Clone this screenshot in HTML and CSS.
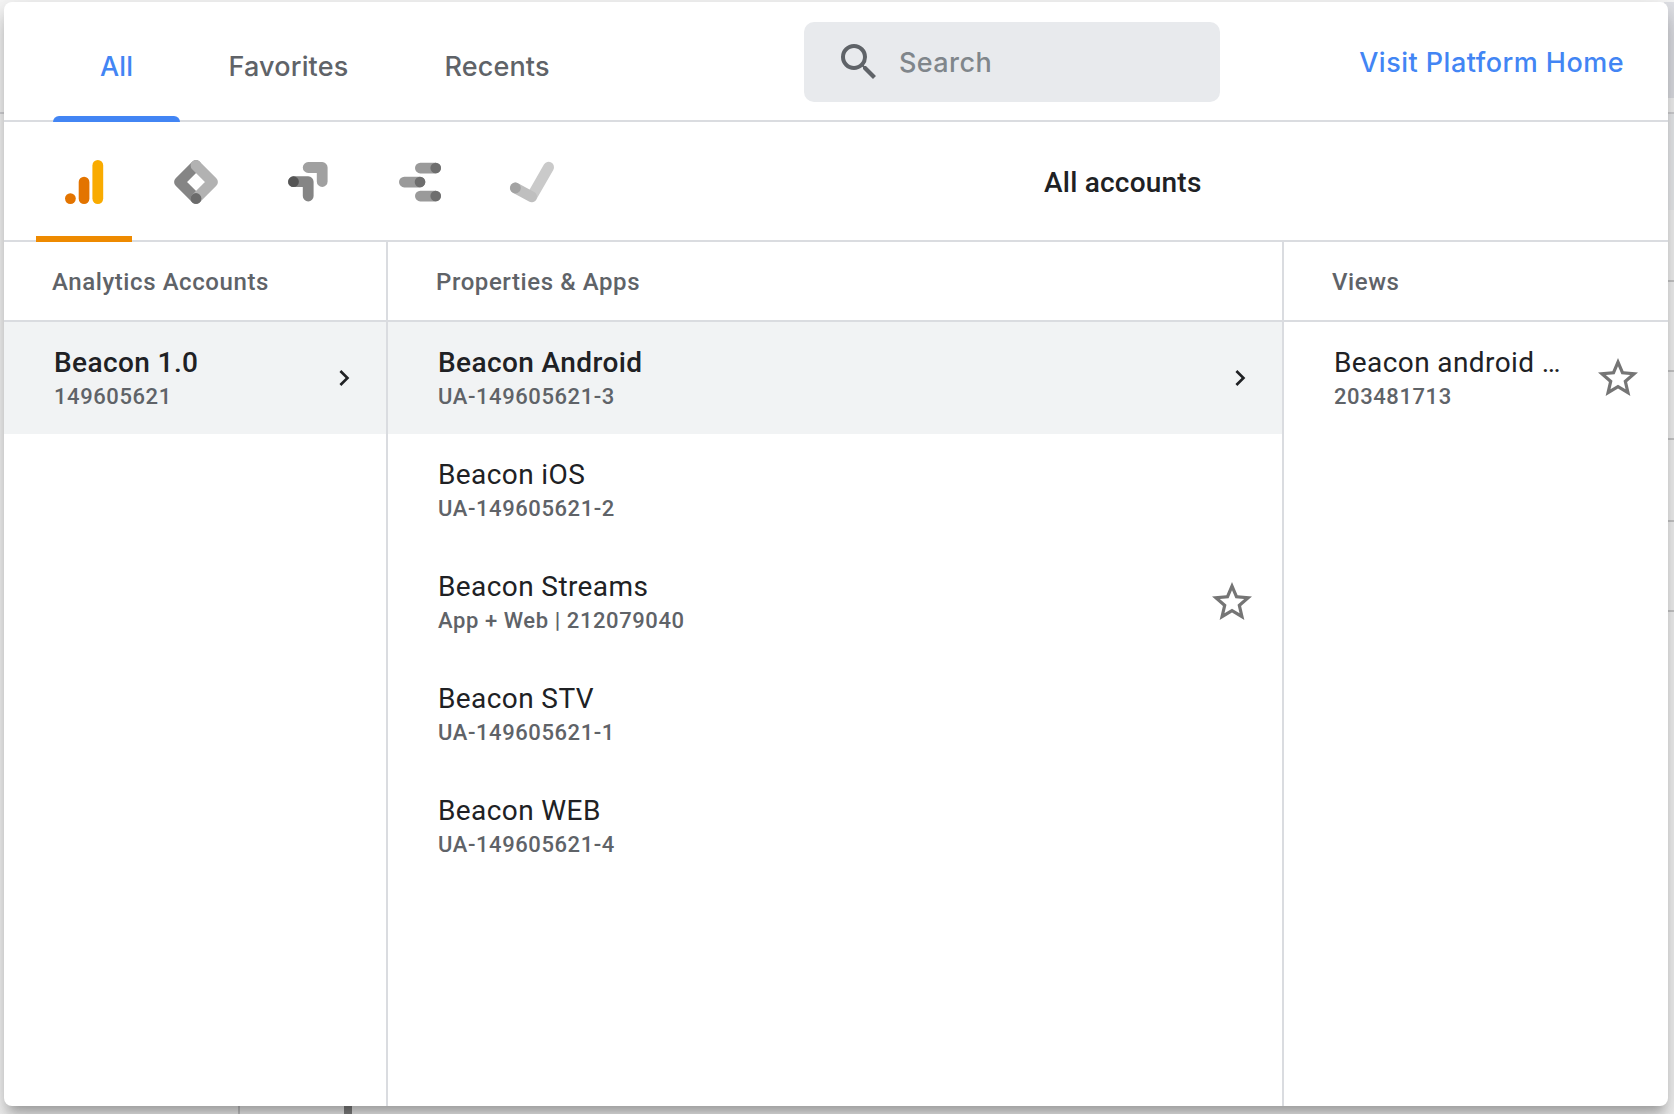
FILE: index.html
```html
<!DOCTYPE html>
<html lang="en">
<head>
<meta charset="utf-8">
<title>All accounts</title>
<link rel="stylesheet" href="styles.css">
</head>
<body>
<div class="backdrop"></div>
<div class="backdrop-bottom"></div>
<main class="panel">
  <header class="topbar">
    <nav class="tabs">
      <a class="tab tab-all">All</a>
      <a class="tab tab-fav">Favorites</a>
      <a class="tab tab-rec">Recents</a>
    </nav>
    <div class="search">
      <svg width="48" height="48" viewBox="0 0 24 24" fill="#5f6368"><path d="M15.5 14h-.79l-.28-.27A6.471 6.471 0 0 0 16 9.5 6.5 6.5 0 1 0 9.5 16c1.61 0 3.09-.59 4.23-1.57l.27.28v.79l5 4.99L20.49 19l-4.99-5zm-6 0C7.01 14 5 11.99 5 9.5S7.01 5 9.5 5 14 7.01 14 9.5 11.99 14 9.5 14z"/></svg>
      <span class="search-text">Search</span>
    </div>
    <a class="home">Visit Platform Home</a>
  </header>
  <section class="products">
    <div class="product active">
      <svg width="44" height="44" viewBox="0 0 44 44"><circle cx="8.4" cy="38.6" r="5.4" fill="#e37400"/><rect x="16.7" y="16.7" width="10.7" height="27.3" rx="5.35" fill="#e37400"/><rect x="30.4" y="0" width="10.8" height="44" rx="5.4" fill="#f9ab00"/></svg>
    </div>
    <div class="product">
      <svg width="44" height="44" viewBox="0 0 44 44" fill="none" stroke-width="10.8" stroke-linecap="round" stroke-linejoin="round"><path d="M22 5.5L5.5 22L22 38.5" stroke="#858585"/><path d="M22 5.5L38.5 22L22 38.5" stroke="#b2b2b2"/><circle cx="22" cy="38.5" r="5.4" fill="#6b6b6b"/></svg>
    </div>
    <div class="product">
      <svg width="44" height="44" viewBox="0 0 44 44" fill="none" stroke-width="10.8" stroke-linecap="round" stroke-linejoin="round"><path d="M22.2 7.5H36.2V21.5" stroke="#a0a0a0"/><path d="M7.5 21.7H22.2V36" stroke="#858585"/><circle cx="7.5" cy="21.7" r="5.4" fill="#555"/></svg>
    </div>
    <div class="product">
      <svg width="44" height="44" viewBox="0 0 44 44"><g fill="#9a9a9a"><rect x="17" y="2.7" width="26" height="10.7" rx="5.35"/><rect x="1" y="16.7" width="26.3" height="10.7" rx="5.35"/><rect x="17" y="30.7" width="26" height="10.7" rx="5.35"/></g><g fill="#6e6e6e"><circle cx="37.7" cy="8" r="5.3"/><circle cx="22" cy="22" r="5.3"/><circle cx="37.7" cy="36" r="5.3"/></g></svg>
    </div>
    <div class="product">
      <svg width="44" height="44" viewBox="0 0 44 44" stroke-width="10.8" stroke-linecap="round"><path d="M21.9 36.4L38.6 7.2" stroke="#cacaca"/><path d="M5.4 28L21.6 36.8" stroke="#bfbfbf"/><circle cx="5.4" cy="28" r="5.4" fill="#a3a3a3"/></svg>
    </div>
    <h1 class="title">All accounts</h1>
  </section>
  <section class="columns">
    <div class="column">
      <h2 class="column-head">Analytics Accounts</h2>
      <div class="row selected">
        <div class="entry"><div class="name">Beacon 1.0</div><div class="id">149605621</div></div>
        <svg width="32" height="32" viewBox="0 0 24 24" fill="#202124"><path d="M10 6L8.59 7.41 13.17 12l-4.58 4.59L10 18l6-6z"/></svg>
      </div>
    </div>
    <div class="column">
      <h2 class="column-head">Properties &amp; Apps</h2>
      <div class="row selected">
        <div class="entry"><div class="name">Beacon Android</div><div class="id">UA-149605621-3</div></div>
        <svg width="32" height="32" viewBox="0 0 24 24" fill="#202124"><path d="M10 6L8.59 7.41 13.17 12l-4.58 4.59L10 18l6-6z"/></svg>
      </div>
      <div class="row"><div class="entry"><div class="name">Beacon iOS</div><div class="id">UA-149605621-2</div></div></div>
      <div class="row">
        <div class="entry"><div class="name">Beacon Streams</div><div class="id">App + Web | 212079040</div></div>
        <svg width="48" height="48" viewBox="0 0 24 24" fill="#757575"><path d="M22 9.24l-7.19-.62L12 2 9.19 8.63 2 9.24l5.46 4.73L5.82 21 12 17.27 18.18 21l-1.63-7.03L22 9.24zM12 15.4l-3.76 2.27 1-4.28-3.32-2.88 4.38-.38L12 6.1l1.71 4.04 4.38.38-3.32 2.88 1 4.28L12 15.4z"/></svg>
      </div>
      <div class="row"><div class="entry"><div class="name">Beacon STV</div><div class="id">UA-149605621-1</div></div></div>
      <div class="row"><div class="entry"><div class="name">Beacon WEB</div><div class="id">UA-149605621-4</div></div></div>
    </div>
    <div class="column">
      <h2 class="column-head">Views</h2>
      <div class="row">
        <div class="entry"><div class="name">Beacon android …</div><div class="id">203481713</div></div>
        <svg width="48" height="48" viewBox="0 0 24 24" fill="#757575"><path d="M22 9.24l-7.19-.62L12 2 9.19 8.63 2 9.24l5.46 4.73L5.82 21 12 17.27 18.18 21l-1.63-7.03L22 9.24zM12 15.4l-3.76 2.27 1-4.28-3.32-2.88 4.38-.38L12 6.1l1.71 4.04 4.38.38-3.32 2.88 1 4.28L12 15.4z"/></svg>
      </div>
    </div>
  </section>
</main>
</body>
</html>
```
FILE: styles.css
```css
* { box-sizing: border-box; }
body {
  margin: 0;
  width: 1674px;
  height: 1114px;
  padding: 2px 6px 8px 4px;
  overflow: hidden;
  background: #f8f8f8;
  font-family: Roboto, "Liberation Sans", sans-serif;
  color: #202124;
}
/* Page content showing around the edges of the panel */
.backdrop {
  position: absolute;
  inset: 0;
  background:
    linear-gradient(#d5d5d8, #d5d5d8) 0 112px / 100% 2px no-repeat,
    linear-gradient(#cccccd, #cccccd) 100% 280px / 10px 2px no-repeat,
    linear-gradient(#cccccd, #cccccd) 100% 370px / 10px 2px no-repeat,
    linear-gradient(#cccccd, #cccccd) 100% 438px / 10px 2px no-repeat,
    linear-gradient(#cccccd, #cccccd) 100% 520px / 10px 2px no-repeat,
    linear-gradient(#cccccd, #cccccd) 100% 610px / 10px 2px no-repeat,
    linear-gradient(#e2e3e8, #e2e3e8) 100% 2px / 10px 96px no-repeat,
    linear-gradient(#f0f2f4, #f0f2f4) 100% 114px / 10px 96px no-repeat;
}
.backdrop-bottom {
  position: absolute;
  left: 0;
  right: 0;
  bottom: 0;
  height: 12px;
  background:
    linear-gradient(#cccccd, #cccccd) 238px 0 / 2px 100% no-repeat,
    linear-gradient(#858585, #858585) 344px 0 / 8px 100% no-repeat;
}
.panel {
  position: relative;
  height: 1104px;
  display: flex;
  flex-direction: column;
  background: #fff;
  border-radius: 8px;
  box-shadow: 0 10px 10px -6px rgba(0,0,0,.2), 0 16px 20px 2px rgba(0,0,0,.14), 0 6px 28px 4px rgba(0,0,0,.12);
}
.topbar {
  height: 120px;
  flex: none;
  display: flex;
  border-bottom: 2px solid #dadce0;
}
.tabs {
  display: flex;
  width: 800px;
  padding-left: 49px;
  font: 500 27px/32px Inter, sans-serif;
  letter-spacing: .15px;
  color: #5f6368;
}
.tab { height: 120px; padding-top: 49px; text-align: center; white-space: nowrap; }
.tab-all { width: 127px; color: #4285f4; display: flex; flex-direction: column; justify-content: space-between; }
.tab-all::after { content: ""; height: 6px; background: #4285f4; border-radius: 6px 6px 0 0; }
.tab-fav { width: 217px; }
.tab-rec { width: 200px; }
.search {
  width: 416px;
  height: 80px;
  margin-top: 20px;
  padding-left: 31px;
  display: flex;
  align-items: center;
  background: #e8eaed;
  border-radius: 10px;
}
.search svg { margin-bottom: 1px; }
.search-text { margin: 2px 0 0 16px; font: 500 27px/32px Inter, sans-serif; letter-spacing: .4px; color: #80868b; }
.home { margin: 45px 44px 0 auto; font: 500 27px/32px Inter, sans-serif; letter-spacing: .48px; color: #4285f4; }
.products {
  height: 120px;
  flex: none;
  display: flex;
  padding-left: 32px;
  gap: 16px;
  border-bottom: 2px solid #dadce0;
}
/* The active underline overlaps the section's bottom border */
.product { width: 96px; height: 120px; padding: 38px 0 0 26px; }
.product svg { display: block; overflow: visible; }
.active { border-bottom: 6px solid #ee8a00; }
.title { margin: 45px 0 0 448px; font: 500 28px/32px Roboto, sans-serif; letter-spacing: .22px; }
.columns { flex: 1; display: grid; grid-template-columns: 382px 896px 386px; }
.column + .column { border-left: 2px solid #dadce0; }
.column-head {
  margin: 0;
  height: 80px;
  padding: 24px 0 0 48px;
  border-bottom: 2px solid #dadce0;
  font: 500 24px/32px Roboto, sans-serif;
  letter-spacing: .58px;
  color: #5f6368;
}
.row {
  height: 112px;
  display: flex;
  align-items: center;
  justify-content: space-between;
  padding: 0 26px 0 50px;
}
.selected { background: #f1f3f4; }
.entry { margin-bottom: -1px; }
.name { font-size: 28px; line-height: 32px; letter-spacing: .4px; padding-top: 3px; white-space: nowrap; }
.selected .name { font-weight: 500; }
.id { margin-top: 2px; font: 500 22px/32px Roboto, sans-serif; letter-spacing: .58px; color: #5f6368; white-space: nowrap; }
```
